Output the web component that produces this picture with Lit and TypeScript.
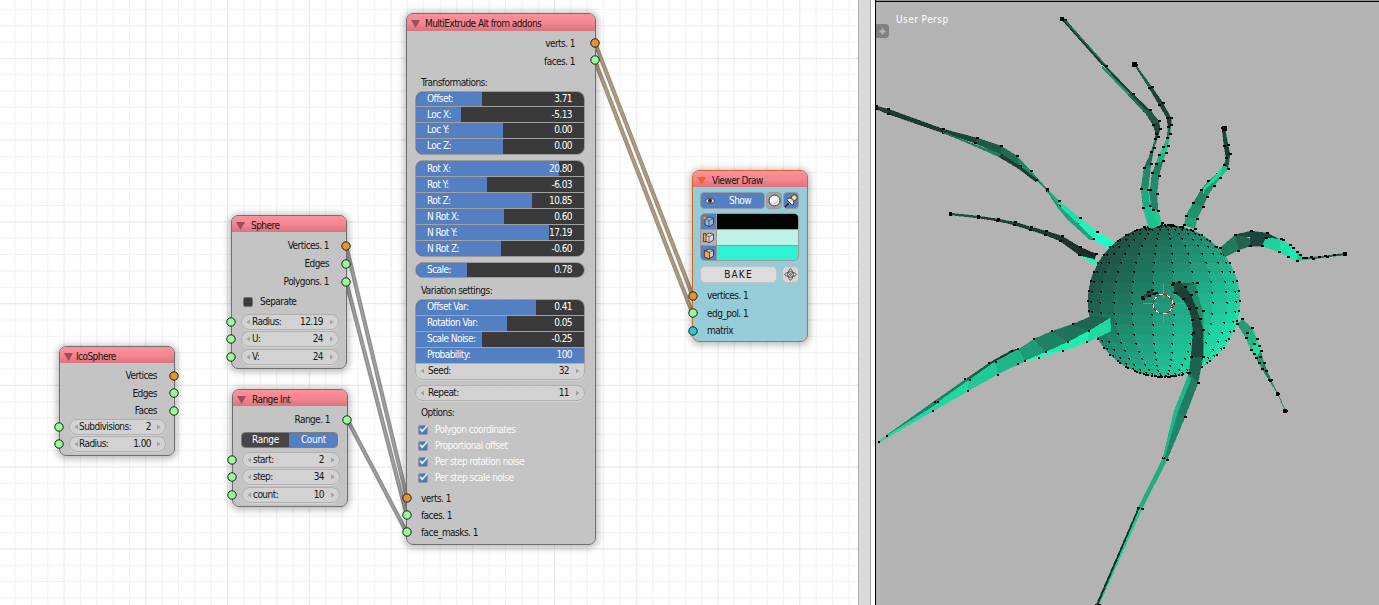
import { LitElement, html, svg, css, nothing } from "lit";
import { customElement, property } from "lit/decorators.js";

type Pt = [number, number];
type Slider = { label: string; value: string; fill: number };

/* ---------- one socket row of a node ---------- */
@customElement("socket-dot")
class SocketDot extends LitElement {
  @property() kind = "green";
  static styles = css`
    :host { display: block; width: 10px; height: 10px; }
    svg { display: block; }
    .green { fill: #97fd97; }
    .orange { fill: #e5952c; }
    .cyan { fill: #25cccb; }
    circle { stroke: #1e1e1e; stroke-width: 1; }
  `;
  render() {
    return html`<svg width="10" height="10"><circle class=${this.kind} cx="5" cy="5" r="4.2"></circle></svg>`;
  }
}

@customElement("number-field")
class NumberField extends LitElement {
  @property() label = "";
  @property() value = "";
  static styles = css`
    :host {
      display: flex; align-items: center; box-sizing: border-box; height: 16px;
      border: 1px solid #b0b0b0; border-radius: 8px; background: #d2d2d2;
      padding: 0 4px; color: #161616; box-shadow: 0 1px 0 rgba(255,255,255,.25);
    }
    .l { flex: 1; padding-left: var(--label-pad, 4px); }
    .v { padding-right: var(--value-pad, 7px); }
    svg { display: block; fill: #a2a2a2; }
  `;
  render() {
    return html`<svg width="4" height="6"><path d="M4 0.5V5.5L0.5 3Z"></path></svg>
      <span class="l">${this.label}</span><span class="v">${this.value}</span>
      <svg width="4" height="6"><path d="M0 0.5V5.5L3.5 3Z"></path></svg>`;
  }
}

@customElement("slider-group")
class SliderGroup extends LitElement {
  @property({ attribute: false }) items: Slider[] = [];
  static styles = css`
    :host {
      display: flex; flex-direction: column; gap: 1px; box-sizing: border-box; overflow: hidden;
      border: 1px solid #999; border-radius: 8px; background: #a2a2a2; color: #fff;
    }
    .row { flex: 1 1 0; min-height: 0; display: grid; background: #3a3a3a; align-items: center; }
    .row > * { grid-area: 1 / 1; }
    .fill { background: #557fc3; align-self: stretch; }
    .text { display: flex; justify-content: space-between; padding: 0 12px 0 11px; }
  `;
  render() {
    return this.items.map(
      (s) => html`<div class="row">
        <div class="fill" style="width:${s.fill}px"></div>
        <div class="text"><span>${s.label}</span><span>${s.value}</span></div>
      </div>`
    );
  }
}

/* ---------- node editor ---------- */
@customElement("node-editor")
class NodeEditor extends LitElement {
  static styles = css`
    :host {
      display: block; position: relative; overflow: hidden; background: #fff;
      font: 10px/12px "DejaVu Sans Condensed", "DejaVu Sans", sans-serif;
      font-stretch: condensed; letter-spacing: -0.55px; color: #141414; white-space: nowrap;
    }
    .layer { position: absolute; left: 0; top: 0; width: 858px; height: 605px; }
    .minor { stroke: #f2f2f2; stroke-width: 1.1; }
    .major { stroke: #eaeaea; stroke-width: 1.1; }
    .halo { stroke: #8a8a8a; stroke-width: 4.2; stroke-linecap: round; opacity: .95; }
    .core { stroke: #a2a2a2; stroke-width: 1.4; }
    .warm { stroke: #c09a66; stroke-width: 1.8; }

    .node {
      position: absolute; box-sizing: border-box; border: 1px solid #6f6f6f; border-radius: 7px;
      background: rgba(190,190,190,.9); box-shadow: 0 1px 7px 2px rgba(0,0,0,.27);
      display: flex; flex-direction: column;
    }
    .ico { left: 59px; top: 346px; width: 116px; height: 110px; }
    .sphere { left: 231px; top: 215px; width: 116px; height: 154px; }
    .range { left: 232px; top: 389px; width: 116px; height: 118px; }
    .multi { left: 406px; top: 13px; width: 190px; height: 532px; }
    .viewer { left: 692px; top: 170px; width: 116px; height: 172px; border-color: #d2691e; background: rgba(143,201,214,.94); }

    .head {
      height: 16px; flex: none; display: flex; align-items: center; padding: 4px 0 0 4px; box-sizing: border-box;
      border-radius: 6px 6px 0 0; background: linear-gradient(#fd929c, #f3858f 55%, #d9737e);
    }
    .head svg { display: block; fill: #9d4f57; width: 9px; height: 8px; flex: none; }
    .head span { padding-left: 6px; }
    .ico .head span { padding-left: 3px; }
    .viewer .head svg { fill: #ef6527; }
    .multi .head { height: 17px; padding: 3px 0 0 4px; }
    .multi .head span { padding-left: 5px; }

    .sock { position: relative; height: 12px; display: flex; align-items: center; flex: none; }
    .sock.out { justify-content: flex-end; padding-right: 17px; }
    .sock.in { padding-left: 14px; }
    .sock socket-dot { position: absolute; top: 0.5px; }
    .out socket-dot { right: -4.5px; }
    .in socket-dot { left: -6px; }
    .stack { display: flex; flex-direction: column; gap: 5.5px; }
    .fields { display: flex; flex-direction: column; gap: 1.3px; }
    .fields .sock { height: 16px; padding: 0 7px 0 9px; }
    .fields .sock socket-dot { top: 3px; }
    .fields number-field { flex: 1; --label-pad: 2px; }

    .ico .stack { padding-top: 7px; }
    .ico .fields { padding-top: 2px; }
    .ico .fields number-field { --label-pad: 1px; }
    .ico .fields .sock { padding-right: 8px; }
    .ico .fields number-field { --value-pad: 6px; }
    .sphere .stack { padding-top: 8px; gap: 6px; }
    .sep { display: flex; align-items: center; gap: 7px; padding: 8px 0 6px 11px; height: 12px; }
    .sep i { width: 10px; height: 10px; box-sizing: border-box; border: 1px solid #777; border-radius: 2px; background: #3d3d3d; }
    .range .stack { padding-top: 8px; }
    .seg { display: flex; margin: 6px 9px 4px 8px; height: 16px; box-sizing: border-box; border: 1px solid #7d7d7d; border-radius: 4px; overflow: hidden; color: #fff; letter-spacing: -.3px; }
    .seg div { flex: 1; display: flex; align-items: center; justify-content: center; background: #464646; }
    .seg .on { background: #557fc3; border-left: 1px solid #777; }

    .multi .stack.outs { padding-top: 7px; gap: 5.5px; }
    .multi .outs .sock { padding-right: 20px; }
    .multi .outs .sock socket-dot { top: -0.5px; }
    .title { padding-left: 14px; height: 12px; }
    .t1 { margin-top: 9.5px; }
    .t2 { margin-top: 7px; }
    .t3 { margin-top: 6px; }
    slider-group { margin: 0 10px 0 8px; flex: none; }
    .s1 { height: 64px; margin-top: 1.5px; }
    .s2 { height: 97px; margin-top: 5.5px; }
    .s3 { height: 16px; margin-top: 4.5px; }
    .s4 { height: 65px; margin-top: 2px; border-radius: 8px 8px 0 0; }
    .seed { margin: -1px 10px 0 8px; height: 17px; border-radius: 0 0 8px 8px; }
    .rep { margin: 5px 10px 0 8px; }
    .checks { display: flex; flex-direction: column; gap: 4px; padding: 5px 0 0 11px; color: #fafafa; }
    .checks div { display: flex; align-items: center; height: 12px; gap: 7px; }
    .checks svg { display: block; }
    .multi .ins { padding-top: 9px; gap: 5px; }
    .multi .ins .sock socket-dot { left: -5px; }
    .viewer .in socket-dot { left: -5px; }

    .tools { display: flex; margin: 5px 8px 0 7px; height: 17px; gap: 1px; }
    .show { width: 65px; box-sizing: border-box; display: flex; align-items: center; gap: 13px; padding-left: 3px; border: 1px solid #929aa5; border-radius: 4px; background: #557fc3; color: #fff; }
    .sq { width: 16px; box-sizing: border-box; border: 1px solid #999; border-radius: 4px; background: #a3a3a3; display: flex; align-items: center; justify-content: center; }
    .sq.on { background: #557fc3; }
    .colors { margin: 4px 8px 0 7px; box-sizing: border-box; border: 1px solid #999; border-radius: 5px; overflow: hidden; display: grid; grid-template-columns: 15px 1fr; grid-template-rows: repeat(3, 15px); gap: 1px; background: #999; height: 48px; flex: none; }
    .colors .b { background: #557fc3; display: flex; align-items: center; justify-content: center; }
    .colors .g { background: #b3b3b3; }
    .c1 { background: #000402; } .c2 { background: #bdf3e5; } .c3 { background: #30f1d4; }
    .bakes { display: flex; margin: 5px 8px 7px 7px; gap: 5px; height: 17px; }
    .bake { width: 77px; box-sizing: border-box; border: 1px solid #bcc4c6; border-radius: 5px; background: #dcdcdc; display: flex; align-items: center; justify-content: center; letter-spacing: 1.2px; }
    .gear { width: 17px; box-sizing: border-box; border: 1px solid #bbb; border-radius: 5px; background: #d6d6d6; display: flex; align-items: center; justify-content: center; }
  `;

  grid() {
    const out = [];
    const s = 16.35;
    for (let k = -18; k <= 34; k++) {
      const x = 309.3 + k * s;
      out.push(svg`<line class=${k % 5 ? "minor" : "major"} x1=${x} x2=${x} y1="0" y2="605"></line>`);
    }
    for (let k = -18; k <= 19; k++) {
      const y = 303.6 + k * s;
      out.push(svg`<line class=${k % 5 ? "minor" : "major"} x1="0" x2="858" y1=${y} y2=${y}></line>`);
    }
    return out;
  }
  link(x1: number, y1: number, x2: number, y2: number, warm = false) {
    return svg`<line class="halo" x1=${x1} y1=${y1} x2=${x2} y2=${y2}></line>
      <line class=${warm ? "warm" : "core"} x1=${x1} y1=${y1} x2=${x2} y2=${y2}></line>`;
  }
  head(t: string) {
    return html`<div class="head"><svg viewBox="0 0 9 8"><path d="M0 0H9L4.5 8Z"></path></svg><span>${t}</span></div>`;
  }
  sock(side: string, t: string, kind = "green") {
    return html`<div class="sock ${side}">${t}<socket-dot kind=${kind}></socket-dot></div>`;
  }
  field(l: string, v: string) {
    return html`<div class="sock in"><number-field label=${l} value=${v}></number-field><socket-dot></socket-dot></div>`;
  }
  check(t: string) {
    return html`<div><svg width="10" height="10" viewBox="0 0 10 10"><rect x=".5" y=".5" width="9" height="9" rx="1.5" fill="#4f79bd" stroke="#8d95a3"></rect><path d="M2 3.6L4.2 6.3L9.3 .6" fill="none" stroke="#f2f5fa" stroke-width="1.5"></path></svg>${t}</div>`;
  }
  cube(kind: number) {
    const body = kind === 0 ? "#93b6dd" : kind === 1 ? "#d9d9d9" : "#c9c9c9";
    return html`<svg width="13" height="13" viewBox="0 0 13 13" stroke="#2d2d33" stroke-width=".8" stroke-linejoin="round">
      <path d="M3 4L7.5 2L11.5 3.5V9L7 11.7L3 9.7Z" fill=${body}></path>
      <path d="M3 4L7 5.6L11.5 3.5M7 5.6V11.7" fill="none" stroke-width=".6"></path>
      ${kind === 0 ? svg`<rect x="1" y="1.4" width="3" height="3" fill="#f5973a" stroke="#b56a1c"></rect>` : nothing}
      ${kind === 1 ? svg`<rect x="1.4" y="2.6" width="2.6" height="8" fill="#f5a54c"></rect>` : nothing}
      ${kind === 2 ? svg`<path d="M2.4 3.6L7.4 5.4V12L2.4 10Z" fill="#f9a54a"></path>` : nothing}
    </svg>`;
  }

  render() {
    const f = (label: string, value: string, edge: number): Slider => ({ label, value, fill: edge - 416 });
    return html`
      <svg class="layer" width="858" height="605">
        ${this.grid()}
        ${this.link(346, 245, 407, 498)}${this.link(346, 281, 407, 516)}${this.link(347, 419, 407, 533)}
        ${this.link(595, 43, 692, 294, true)}${this.link(595, 61, 692, 312, true)}
      </svg>

      <div class="node ico">
        ${this.head("IcoSphere")}
        <div class="stack">${this.sock("out", "Vertices", "orange")}${this.sock("out", "Edges")}${this.sock("out", "Faces")}</div>
        <div class="fields">${this.field("Subdivisions:", "2")}${this.field("Radius:", "1.00")}</div>
      </div>

      <div class="node sphere">
        ${this.head("Sphere")}
        <div class="stack">${this.sock("out", "Vertices. 1", "orange")}${this.sock("out", "Edges")}${this.sock("out", "Polygons. 1")}</div>
        <div class="sep"><i></i>Separate</div>
        <div class="fields">${this.field("Radius:", "12.19")}${this.field("U:", "24")}${this.field("V:", "24")}</div>
      </div>

      <div class="node range">
        ${this.head("Range Int")}
        <div class="stack">${this.sock("out", "Range. 1")}</div>
        <div class="seg"><div>Range</div><div class="on">Count</div></div>
        <div class="fields">${this.field("start:", "2")}${this.field("step:", "34")}${this.field("count:", "10")}</div>
      </div>

      <div class="node multi">
        ${this.head("MultiExtrude Alt from addons")}
        <div class="stack outs">${this.sock("out", "verts. 1", "orange")}${this.sock("out", "faces. 1")}</div>
        <div class="title t1">Transformations:</div>
        <slider-group class="s1" .items=${[f("Offset:", "3.71", 482), f("Loc X:", "-5.13", 461), f("Loc Y:", "0.00", 503), f("Loc Z:", "0.00", 503)]}></slider-group>
        <slider-group class="s2" .items=${[f("Rot X:", "20.80", 559), f("Rot Y:", "-6.03", 487), f("Rot Z:", "10.85", 532), f("N Rot X:", "0.60", 504), f("N Rot Y:", "17.19", 549), f("N Rot Z:", "-0.60", 501)]}></slider-group>
        <slider-group class="s3" .items=${[f("Scale:", "0.78", 467)]}></slider-group>
        <div class="title t2">Variation settings:</div>
        <slider-group class="s4" .items=${[f("Offset Var:", "0.41", 536), f("Rotation Var:", "0.05", 507), f("Scale Noise:", "-0.25", 482), f("Probability:", "100", 584)]}></slider-group>
        <number-field class="seed" label="Seed:" value="32"></number-field>
        <number-field class="rep" label="Repeat:" value="11"></number-field>
        <div class="title t3">Options:</div>
        <div class="checks">${this.check("Polygon coordinates")}${this.check("Proportional offset")}${this.check("Per step rotation noise")}${this.check("Per step scale noise")}</div>
        <div class="stack ins">${this.sock("in", "verts. 1", "orange")}${this.sock("in", "faces. 1")}${this.sock("in", "face_masks. 1")}</div>
      </div>

      <div class="node viewer">
        ${this.head("Viewer Draw")}
        <div class="tools">
          <div class="show"><svg width="12" height="8" viewBox="0 0 11 8"><path d="M.5 4Q5.5 -1.5 10.5 4Q5.5 8.5 .5 4Z" fill="#f2f2f2" stroke="#333" stroke-width=".8"></path><circle cx="5.5" cy="3.7" r="2" fill="#222"></circle></svg>Show</div>
          <div class="sq"><svg width="13" height="13"><circle cx="6.5" cy="6.5" r="5.5" fill="#f4f4f4" stroke="#333" stroke-width="1"></circle><path d="M3.5 10Q8.5 10 10.3 5.5" stroke="#cfcfcf" fill="none" stroke-width="1.3"></path></svg></div>
          <div class="sq on"><svg width="14" height="14" viewBox="0 0 14 14" stroke="#222" stroke-width=".8"><path d="M1 13L4.5 9.5" stroke-width="1.6"></path><path d="M2.5 5.5L8.5 11.5L10 8.5L9.5 7L12.5 4.5L9.5 1.5L7 4.5L5.5 4Z" fill="#e6e2c4"></path><path d="M4 5.5L8.3 10" stroke="#f7f7ee"></path><circle cx="10.3" cy="3.6" r="2.8" fill="#e9e58c"></circle></svg></div>
        </div>
        <div class="colors">
          <div class="b">${this.cube(0)}</div><div class="c1"></div>
          <div class="b g">${this.cube(1)}</div><div class="c2"></div>
          <div class="b">${this.cube(2)}</div><div class="c3"></div>
        </div>
        <div class="bakes"><div class="bake">BAKE</div>
          <div class="gear"><svg width="13" height="13" viewBox="0 0 13 13" fill="none" stroke="#444" stroke-width=".9"><path d="M6.5 .6L8.3 2.8V4.7H10.2L12.4 6.5L10.2 8.3H8.3V10.2L6.5 12.4L4.7 10.2V8.3H2.8L.6 6.5L2.8 4.7H4.7V2.8Z"></path><circle cx="6.5" cy="6.5" r="2.9"></circle><circle cx="6.5" cy="6.5" r=".9"></circle></svg></div>
        </div>
        <div class="stack">${this.sock("in", "vertices. 1", "orange")}${this.sock("in", "edg_pol. 1")}${this.sock("in", "matrix", "cyan")}</div>
      </div>
    `;
  }
}

/* ---------- 3D viewport ---------- */
@customElement("view-3d")
class View3D extends LitElement {
  static styles = css`
    :host { display: flex; flex-direction: column; position: relative; overflow: hidden; background: #b3b3b3; border-left: 1px solid #000; font: 10px/12px "DejaVu Sans Condensed", "DejaVu Sans", sans-serif; font-stretch: condensed; letter-spacing: .45px; }
    .bar { height: 1px; background: #93968f; border-bottom: 1px solid #000; flex: none; }
    .name { padding: 12px 0 0 20px; color: #fff; white-space: nowrap; z-index: 1; }
    .plus { width: 13px; height: 14px; margin-top: -2px; border-radius: 0 4px 4px 0; background: #808080; display: flex; align-items: center; justify-content: center; z-index: 1; }
    .scene { position: absolute; left: 0; top: 0; }
    .plus svg { display: block; }
  `;

  quad(p: Pt[], c: string) {
    return svg`<polygon points=${p.map((q) => q.join(",")).join(" ")} fill=${c} stroke=${c} stroke-width=".4"></polygon>`;
  }
  dot(x: number, y: number, s = 2.6) {
    return svg`<rect x=${Math.round(x - s / 2)} y=${Math.round(y - s / 2)} width=${Math.round(s)} height=${Math.floor(s)} fill="#000"></rect>`;
  }
  // mesh vertex: a small hooked mark rather than a full square
  speck(x: number, y: number) {
    const X = Math.round(x), Y = Math.round(y);
    return svg`<path d=${`M${X - 1} ${Y - 1}H${X + 1}V${Y + 1}H${X}V${Y}H${X - 1}Z`} fill="#000"></path>`;
  }
  strip(a: Pt[], b: Pt[], cols: string[], dots = true) {
    const out = [];
    for (let i = 0; i < a.length - 1; i++) out.push(this.quad([a[i], a[i + 1], b[i + 1], b[i]], cols[Math.min(i, cols.length - 1)]));
    if (dots) for (let i = 0; i < a.length; i++) out.push(this.dot(...a[i]), this.dot(...b[i]));
    return out;
  }

  sphere() {
    const D = 12, e = (2.1 * Math.PI) / 180, R = 76 / 1.0035, cx = 1164, cy = 301;
    const pos = (lat: number, lon: number) => {
      const x = Math.cos(lat) * Math.sin(lon), y0 = Math.sin(lat), z0 = Math.cos(lat) * Math.cos(lon);
      const y = y0 * Math.cos(e) - z0 * Math.sin(e), z = y0 * Math.sin(e) + z0 * Math.cos(e);
      const k = D / (D - z);
      return { x, y, z, p: [cx + x * k * R, cy - y * k * R] as Pt };
    };
    const r = Math.PI / 180, out: unknown[] = [], dots: unknown[] = [];
    for (let i = -12; i < 12; i++)
      for (let j = 0; j < 24; j++) {
        const lo = -8.2 + j * 15, la = i * 7.5;
        const m = pos((la + 3.75) * r, (lo + 7.5) * r);
        const a = pos(la * r, lo * r);
        if (a.z > -0.02) dots.push(Math.abs(a.z) < 0.2 ? this.dot(a.p[0], a.p[1], 2.2) : this.speck(a.p[0], a.p[1]));
        if (m.z < -0.12) continue;
        const t = Math.max(0.1, Math.min(1, 0.47 + 0.33 * m.x - 0.26 * m.y));
        const c = `rgb(${Math.round(28 + 4 * (1 - Math.abs(t - 0.5)))},${Math.round(62 + 188 * t)},${Math.round(54 + 138 * t)})`;
        out.push(this.quad([a.p, pos(la * r, (lo + 15) * r).p, pos((la + 7.5) * r, (lo + 15) * r).p, pos((la + 7.5) * r, lo * r).p], c));
      }
    return [out, dots];
  }

  render() {
    const q = (c: string, ...p: Pt[]) => this.quad(p, c);
    return html`
      <div class="bar"></div>
      <div class="name">User Persp</div>
      <div class="plus"><svg width="7" height="7"><path d="M3.5 .5V6.5M.5 3.5H6.5" stroke="#b5b5b5" stroke-width="2"></path></svg></div>
      <svg class="scene" width="503" height="605" viewBox="876 0 503 605" shape-rendering="crispEdges">
        ${this.strip(
          [[876,106],[888,109],[943,129],[977,138],[1001,146],[1017,156],[1031,171],[1047,189]],
          [[876,109],[888,114],[943,133],[975,143],[1001,155],[1020,166],[1036,180],[1047,191]],
          ["#1c3f37","#1b3831","#1d463b","#1e5946","#1f6b54","#1f8567","#1f8567"])}
        ${this.strip([[943,132],[974,144],[1001,154],[1020,166],[1036,179]], [[943,133],[972,145],[999,157],[1019,169],[1036,182]], ["#1f7a60","#1f8065","#1c3f36","#1c3a33"], false)}
        ${this.strip([[1047,189],[1059,201],[1080,218],[1097,232],[1116,243]], [[1047,191],[1059,206],[1077,224],[1093,239],[1110,250]], ["#20b087","#1fe0a8","#1df5b8","#1dffc4"])}
        ${this.strip([[1047,190],[1058,205],[1077,223],[1093,239]], [[1047,191],[1058,208],[1068,220],[1090,240]], ["#208f6e","#20a17c","#20a17c"], false)}
        ${this.strip(
          [[950,213],[978,216],[998,219],[1015,222],[1031,227],[1046,231],[1062,236],[1080,247],[1096,254]],
          [[950,215],[978,218],[997,221],[1014,225],[1030,230],[1045,235],[1060,241],[1079,255],[1094,262]],
          ["#1d5043","#1c3d35","#1d463c","#1c3d35","#1c3a33","#1c3a33","#1c332f","#1b2a28"])}
        ${q("#1ef5b8", [1081,256],[1093,259],[1101,263],[1097,265],[1088,261])}
        ${this.sphere()}

        ${this.strip(
          [[1062,19],[1102,64],[1128,93],[1144,111],[1153,125],[1156,134],[1155,139],[1151,152],[1144,168],[1141,189],[1143,208],[1149,229]],
          [[1065,20],[1106,66],[1133,94],[1150,110],[1159,121],[1160,129],[1158,137],[1154,148],[1151,164],[1148,190],[1150,206],[1160,226]],
          ["#1c3b34","#1c3b34","#1d4539","#1e5946","#1d473c","#1d4037","#1f7058","#1f6b55","#1f8a6a","#20a880","#20c090"])}
        ${this.strip([[1062,20],[1102,65]], [[1064,18],[1105,64]], ["#1c3b34"], false)}
        ${this.strip([[1066,21],[1106,65]], [[1065,21],[1105,65]], ["#1f7a60"], false)}
        ${this.strip([[1102,68],[1128,95],[1144,112]], [[1102,66],[1130,94],[1148,113]], ["#208f6e","#1f7058"], false)}
        ${q("#1f8568", [1149,190],[1151,205],[1160,226],[1156,207])}
        ${this.strip(
          [[1133,63],[1149,88],[1159,105],[1167,118],[1168,127],[1167,138],[1163,147],[1159,155],[1156,164],[1152,173],[1150,190],[1153,210],[1158,227]],
          [[1136,65],[1152,87],[1163,103],[1171,118],[1171,125],[1170,134],[1168,146],[1166,153],[1163,161],[1159,176],[1157,194],[1158,211],[1162,223]],
          ["#1f5f4e","#1d4339","#1d4038","#1c3630","#1f6a54","#20b388","#20c894","#20b088","#1f7f63","#1f8c6d","#1f8467","#20ca96"])}
        ${this.strip(
          [[1222,128],[1224,146],[1226,158],[1224,165],[1217,174],[1208,181],[1201,190],[1193,203],[1186,216],[1184,225]],
          [[1225,128],[1228,145],[1230,154],[1228,169],[1220,178],[1214,186],[1207,197],[1203,207],[1197,219],[1195,229]],
          ["#1d453b","#1c3832","#1e5746","#20c08f","#20a27c","#1f9070","#1f8366","#20916f","#20a27c"])}
        ${q("#20dca4", [1222,167],[1220,176],[1205,189],[1203,194],[1204,187],[1216,175])}
        ${this.dot(1134, 64, 5)}${this.dot(1224, 128, 5)}${this.dot(1062, 19, 4)}

        ${q("#1f7a60", [1220,248],[1235,235],[1239,250],[1225,257])}
        ${q("#1e6650", [1235,235],[1241,233],[1251,240],[1250,246],[1239,250])}
        ${q("#1c463c", [1235,235],[1251,231],[1267,233],[1283,241],[1266,238],[1263,246],[1250,246],[1250,237])}
        ${this.strip(
          [[1266,238],[1281,239],[1290,245],[1297,252],[1303,258],[1325,256],[1345,253]],
          [[1262,246],[1279,252],[1288,257],[1297,261],[1313,259],[1327,257],[1345,255]],
          ["#20d09c","#1ee2aa","#1ee8b0","#20c896","#1f7a60","#1f5f4c"])}
        ${[[1220,248],[1238,251],[1235,235],[1251,231],[1267,233],[1250,246],[1283,240],[1293,248],[1300,255],[1306,258],[1311,257],[1319,257],[1334,255]].map((p) => this.dot(p[0], p[1]))}
        ${this.dot(1345, 254, 4)}

        ${this.strip(
          [[1237,324],[1246,338],[1251,350],[1256,358],[1262,369],[1269,380],[1277,393],[1285,410]],
          [[1242,319],[1252,328],[1257,339],[1261,351],[1264,363],[1271,380],[1278,394],[1286,411]],
          ["#20a07a","#20b488","#20dca5","#209a76","#1f7a60","#1f8a6a","#1f8a6a"])}
        ${[[1247,333],[1254,344],[1259,346],[1254,354],[1260,357],[1259,363],[1266,371]].map((p) => this.dot(p[0], p[1]))}
        ${this.dot(1270, 380, 3)}${this.dot(1277, 394, 3)}${this.dot(1285, 411, 4)}

        ${q("#20d8a2", [876,444],[887,435],[937,402],[933,411],[880,442])}
        ${q("#1f8267", [887,435],[936,400],[966,379],[969,380],[938,403])}
        ${q("#20d8a2", [938,402],[969,380],[968,391],[933,411])}
        ${q("#1d5f4d", [966,379],[989,363],[996,361],[969,380])}
        ${q("#1c3a33", [989,363],[1012,350],[1019,349],[996,362])}
        ${q("#20c997", [969,380],[996,361],[998,374],[968,391])}
        ${q("#20b489", [996,361],[1019,349],[1025,361],[998,374])}
        ${q("#209a77", [1019,349],[1034,339],[1046,352],[1025,361])}
        ${q("#1f8265", [1034,339],[1052,331],[1068,342],[1046,352])}
        ${q("#1e735a", [1052,331],[1073,324],[1089,331],[1068,342])}
        ${q("#1c6550", [1073,324],[1092,316],[1109,318],[1089,331])}
        ${q("#1dfcbe", [1025,361],[1046,352],[1063,350],[1038,358])}
        ${q("#1eecb2", [1046,352],[1068,342],[1089,331],[1088,342],[1063,351])}
        ${q("#20d8a2", [1089,331],[1110,318],[1111,331],[1088,342])}
        ${[[879,442],[887,436],[935,402],[938,402],[933,411],[965,379],[970,380],[968,391],[989,363],[996,362],[998,375],[1012,351],[1018,349],[1018,364],[1025,361],[1034,339],[1046,352],[1039,358],[1052,331],[1068,342],[1063,351],[1073,324],[1089,331],[1087,342]].map((p) => this.dot(p[0], p[1], 2.2))}

        ${this.strip([[1142,297],[1148,292],[1152,290]], [[1143,299],[1149,296],[1154,294]], ["#1d4a3e"])}
        ${this.dot(1142, 297, 3)}${this.dot(1156, 293)}

        ${this.strip([[1180,283],[1196,283],[1197,294],[1203,311],[1203,330]], [[1180,283],[1184,287],[1191,296],[1196,308],[1202,330]], ["#1e6650","#1f8065","#1f8c6c","#1f8c6c"], false)}
        ${this.strip(
          [[1173,283],[1175,293],[1183,299],[1189,309],[1192,320],[1193,333],[1191,357],[1189,373],[1175,411],[1163,458],[1138,508],[1096,605]],
          [[1179,282],[1185,287],[1191,295],[1196,308],[1200,319],[1203,330],[1203,357],[1198,383],[1185,417],[1167,460],[1142,509],[1099,605]],
          ["#1d493d","#1c3f36","#1c3a33","#1d4238","#1d473c","#1d483d","#1e6550","#1f7d61","#1f8769","#20ad84","#20ca98"])}
        ${q("#20b68b", [1188,376],[1191,379],[1177,414],[1165,456],[1163,458],[1174,411])}
        ${q("#1b302c", [1096,605],[1138,508],[1139,509],[1098,605])}
        ${[[1197,283],[1196,292],[1203,311],[1172,285]].map((p) => this.dot(p[0], p[1]))}

        <g fill="none" stroke="#7f8e88" stroke-width="1">
          <path d="M1163.5 284V298M1163.5 315V324M1143 303.5H1158M1175 303.5H1184"></path>
        </g>
        <circle cx="1163" cy="304" r="9.6" fill="none" stroke="#fff" stroke-width="1.2"></circle>
        <circle cx="1163" cy="304" r="9.6" fill="none" stroke="#e01010" stroke-width="1.2" stroke-dasharray="3.77 3.77"></circle>
      </svg>
    `;
  }
}

@customElement("app-root")
class AppRoot extends LitElement {
  static styles = css`
    :host { display: grid; grid-template-columns: 858px 17px 504px; width: 1379px; height: 605px; overflow: hidden; }
    .split { display: flex; background: #fff; }
    .split div { width: 11px; border-left: 1px solid #adadad; border-right: 1px solid #a4a4a4; background: #dadada; }
  `;
  render() {
    return html`<node-editor></node-editor><div class="split"><div></div></div><view-3d></view-3d>`;
  }
}
